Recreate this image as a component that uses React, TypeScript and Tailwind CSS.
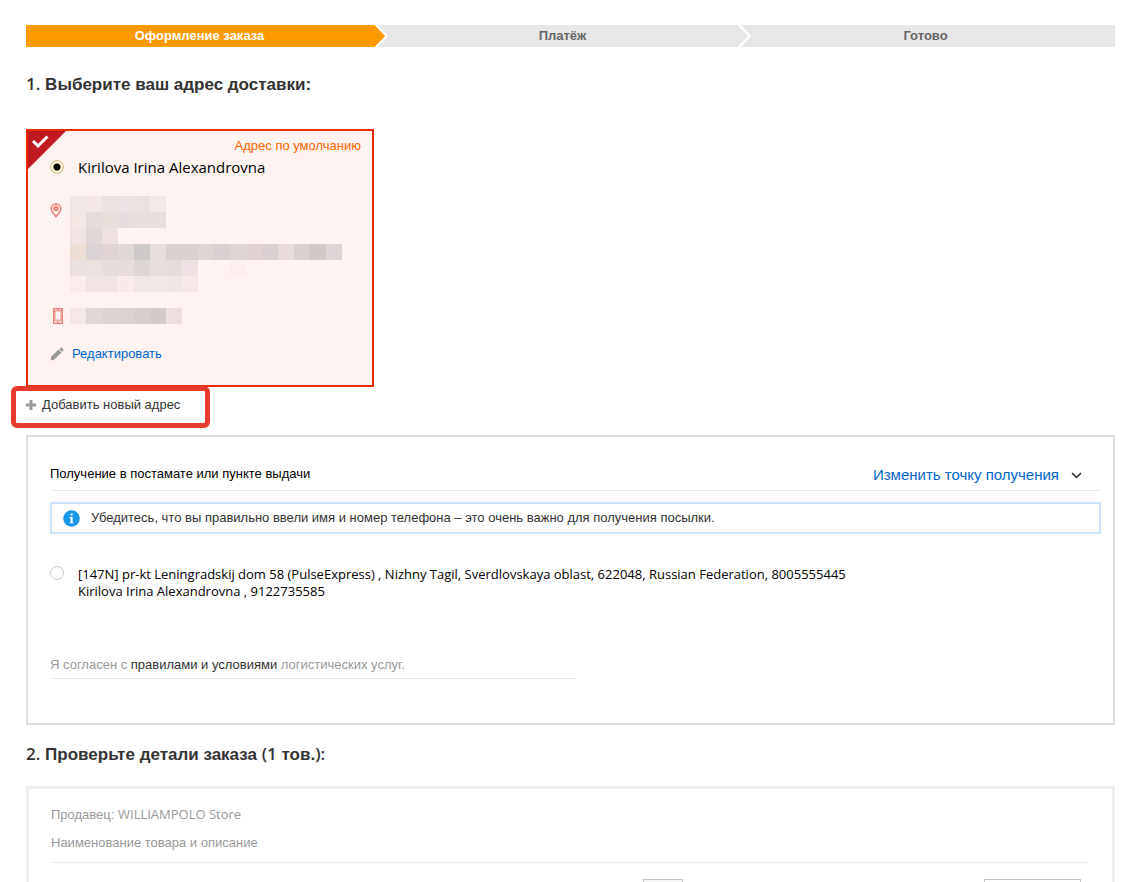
import clsx from 'clsx';

const CELL = 16;

const steps = ['Оформление заказа', 'Платёж', 'Готово'];

// Hidden customer data, one colour per cell ('' leaves a cell empty)
const addressCells = [
  ['#f1e6e6', '#f2e6e7', '#ebe1de', '#ece2e3', '#eae2e0', '#f2e8e7'],
  ['#f3e7e4', '#e4dbda', '#e7deda', '#e7dcdd', '#e8dedc', '#e8dfdd'],
  ['#efe3e4', '#e1d7d7', '#ece0e1'],
  [
    '#ecded5', '#dad3d5', '#dfd4d3', '#e0d8d4', '#cfcaca', '#e7dedc', '#dbd1d0', '#dbd1d0', '#ded4d2',
    '#d9cfd0', '#ded4d3', '#e1d2d2', '#dad0d2', '#e6dadb', '#d8cfce', '#d2c9c6', '#ded4d6',
  ],
  ['#e9e0df', '#ebe2e0', '#e5dddc', '#e7dcdc', '#ded6d5', '#e7dddb', '#e4dcd9', '#ede1e3', '', '', '#fcf0ee'],
  ['#f9ecea', '#efe4e3', '#f0e5e4', '#f8ebea', '#f0e7e4', '#f1e7e4', '#efe6e3', '#f4e8e9'],
];

const phoneCells = [['#f4e9e8', '#e0d7d6', '#dcd3d2', '#dcd3d1', '#d8cfcd', '#d3cbc9', '#ebe0df']];

function Mosaic({ rows }: { rows: string[][] }) {
  const cols = Math.max(...rows.map((row) => row.length));
  return (
    <svg width={cols * CELL} height={rows.length * CELL} shapeRendering="crispEdges" aria-hidden="true">
      {rows.map((row, y) =>
        row.map(
          (fill, x) =>
            fill && <rect key={`${x}-${y}`} x={x * CELL} y={y * CELL} width={CELL} height={CELL} fill={fill} />,
        ),
      )}
    </svg>
  );
}

function Latin({ children }: { children: React.ReactNode }) {
  return <span className="font-['Open_Sans',sans-serif]">{children}</span>;
}

function StepArrow({ active }: { active: boolean }) {
  return (
    <svg className="w-4 h-[22px] shrink-0 bg-[#e7e7e7]" viewBox="0 0 16 22" aria-hidden="true">
      {active && <path d="M0 0H2L12.5 11L2 22H0Z" fill="#ff9900" />}
      <path d="M1.5 0H5L15.2 11.2L5 22H1.5L12.2 11.2Z" fill="#fff" />
    </svg>
  );
}

function Steps() {
  return (
    <ol className="flex text-[13px] font-bold">
      {steps.map((label, i) => (
        <li
          key={label}
          className={clsx(
            'flex flex-1 h-[22px] leading-[22px]',
            i === 0 ? 'bg-[#ff9900] text-white' : 'bg-[#e7e7e7] text-[#666]',
          )}
        >
          <span className="flex-1 text-center">{label}</span>
          {i < steps.length - 1 ? <StepArrow active={i === 0} /> : <span className="w-4" />}
        </li>
      ))}
    </ol>
  );
}

function PinIcon() {
  return (
    <svg width="12" height="15" viewBox="0 0 12 15" fill="none" stroke="#ea7466" strokeWidth="1.4" aria-hidden="true">
      <path d="M6 13.6C4.2 11.4 1.2 8.7 1.2 5.8A4.8 4.8 0 0 1 10.8 5.8C10.8 8.7 7.8 11.4 6 13.6Z" />
      <circle cx="6" cy="5.6" r="1.8" strokeWidth="1.8" />
    </svg>
  );
}

function PhoneIcon() {
  return (
    <svg width="10" height="16" viewBox="0 0 10 16" fill="none" stroke="#ea7466" aria-hidden="true">
      <rect x=".7" y=".7" width="8.6" height="14.6" strokeWidth="1.2" />
      <path d="M1 2.8H9M1 12.2H9M2 3V12M8 3V12" strokeWidth=".8" />
      <path d="M4 1.8H6M4 13.8H6" strokeWidth="1.2" />
    </svg>
  );
}

function PencilIcon() {
  return (
    <svg width="14" height="14" viewBox="0 0 14 14" fill="#999" aria-hidden="true">
      <path d="M.5 13.5L1.4 9.4L8.6 2.5L11.6 5.5L4.4 12.6Z" />
      <path d="M9.4 1.9L10.7 .7Q11.3 .3 11.9 .8L13.3 2.2Q13.7 2.8 13.3 3.4L12.2 4.7Z" />
    </svg>
  );
}

function AddressCard() {
  return (
    <div className="relative w-[348px] max-w-full border-2 border-[#e62e04] bg-[#fff3f1] pb-[21px]">
      <svg className="absolute left-0 top-0" width="38" height="38" viewBox="0 0 38 38" aria-hidden="true">
        <path d="M0 0H38L0 38Z" fill="#c11920" />
        <path d="M5 10L10 15L19.5 5.5" fill="none" stroke="#fff" strokeWidth="3" />
      </svg>
      <p className="h-7 leading-[29px] pr-[11px] text-right text-[13px] text-[#ff6600]">Адрес по умолчанию</p>
      <label className="flex h-4 items-center pl-[22px]">
        <input
          type="radio"
          name="address"
          defaultChecked
          className="size-3.5 appearance-none rounded-full border border-[#cfc19a] bg-[#fbeecb] bg-[radial-gradient(circle,#000_3px,transparent_4px)]"
        />
        <span className="pl-3.5 font-['Open_Sans',sans-serif] text-[15px] font-medium leading-4 text-black">
          Kirilova Irina Alexandrovna
        </span>
      </label>
      <div className="mt-[21px] flex pl-[22px]">
        <span className="w-5 pt-[7px]">
          <PinIcon />
        </span>
        <Mosaic rows={addressCells} />
      </div>
      <div className="mt-4 flex pl-[22px]">
        <span className="w-5 pl-[3px]">
          <PhoneIcon />
        </span>
        <Mosaic rows={phoneCells} />
      </div>
      <a href="#edit" className="mt-5 flex h-5 items-center gap-2 pl-[22px] text-[13px] text-[#0066cc]">
        <PencilIcon />
        Редактировать
      </a>
    </div>
  );
}

function AddAddress() {
  return (
    <div className="relative flex">
      <button type="button" className="flex h-9 items-center gap-1.5 text-[13px] text-[#333]">
        <svg width="10" height="10" viewBox="0 0 10 10" stroke="#999" strokeWidth="3" aria-hidden="true">
          <path d="M5 0V10M0 5H10" />
        </svg>
        Добавить новый адрес
      </button>
      <span className="pointer-events-none absolute -left-[15px] -top-px h-[42px] w-[199px] rounded-md border-[5px] border-[#e73a2f]" />
    </div>
  );
}

function PickupPanel() {
  return (
    <section className="mt-3 border-2 border-[#ddd] pb-11 pl-[22px] pr-3 pt-5">
      <div className="flex h-[34px] justify-between border-b border-[#e8e8e8]">
        <h3 className="leading-[34px] text-[13px] text-black">Получение в постамате или пункте выдачи</h3>
        <button type="button" className="flex items-center gap-3 pr-[19px] pt-1 text-[15px] text-[#0066cc]">
          Изменить точку получения
          <svg width="11" height="7" viewBox="0 0 11 7" fill="none" stroke="#222" strokeWidth="1.5" aria-hidden="true">
            <path d="M1 1L5.5 5.5L10 1" />
          </svg>
        </button>
      </div>

      <p className="mt-[11px] flex h-8 items-center gap-[11px] border-2 border-[#cce3ff] pl-[11px] text-[13px] text-[#333]">
        <svg width="17" height="17" viewBox="0 0 17 17" aria-hidden="true">
          <circle cx="8.5" cy="8.5" r="8.3" fill="#1a96ea" />
          <path d="M7.4 3.6H9.6V5.4H7.4ZM6.8 7H9.6V12H10.4V13.2H6.8V12H7.5V8.2H6.8Z" fill="#fff" />
        </svg>
        Убедитесь, что вы правильно ввели имя и номер телефона – это очень важно для получения посылки.
      </p>

      <label className="mt-8 flex items-start gap-3.5">
        <input
          type="radio"
          name="pickup"
          className="size-3.5 shrink-0 appearance-none rounded-full border border-[#c8c8c8] bg-white"
        />
        <span className="font-['Open_Sans',sans-serif] text-[13px] leading-[17px] text-black">
          [147N] pr-kt Leningradskij dom 58 (PulseExpress) , Nizhny Tagil, Sverdlovskaya oblast, 622048, Russian
          Federation, 8005555445
          <br />
          Kirilova Irina Alexandrovna , 9122735585
        </span>
      </label>

      <p className="mt-[55px] w-1/2 border-b border-[#e8e8e8] pb-[3px] text-[13px] leading-5 text-[#999]">
        Я согласен с{' '}
        <a href="#terms" className="text-[#333]">
          правилами и условиями
        </a>{' '}
        логистических услуг.
      </p>
    </section>
  );
}

function OrderPanel() {
  return (
    <section className="mt-[17px] border-[3px] border-[#ededed] pb-6 pl-[22px] pr-6 pt-[11px] text-[13px] leading-7 text-[#999]">
      <p>
        Продавец: <Latin>WILLIAMPOLO Store</Latin>
      </p>
      <p className="border-b border-[#ededed] pb-[5px]">Наименование товара и описание</p>
      <div className="mt-4 flex justify-end pr-[7px]">
        <input
          type="text"
          aria-label="Количество"
          className="h-6 w-10 border border-[#c4c4c4] bg-[#f7f7f7]"
        />
        <select aria-label="Доставка" className="ml-[301px] h-6 w-[97px] appearance-none border border-[#c4c4c4] bg-white" />
      </div>
    </section>
  );
}

export default function App() {
  return (
    <main className="h-screen overflow-hidden bg-white pl-[26px] pr-2.5 pt-[25px] font-['Liberation_Sans',Arial,sans-serif]">
      <Steps />

      <h2 className="mb-[30px] mt-[23px] text-[17px] font-bold leading-7 text-[#333]">
        <span className="font-['Open_Sans',sans-serif] font-semibold">1.</span> Выберите ваш адрес доставки:
      </h2>
      <AddressCard />
      <AddAddress />
      <PickupPanel />

      <h2 className="mt-[15px] text-[17px] font-bold leading-7 text-[#333]">
        <span className="font-['Open_Sans',sans-serif] font-semibold">2.</span> Проверьте детали заказа{' '}
        <span className="font-['Open_Sans',sans-serif] font-semibold">(1</span> тов.
        <span className="font-['Open_Sans',sans-serif] font-semibold">):</span>
      </h2>
      <OrderPanel />
    </main>
  );
}
